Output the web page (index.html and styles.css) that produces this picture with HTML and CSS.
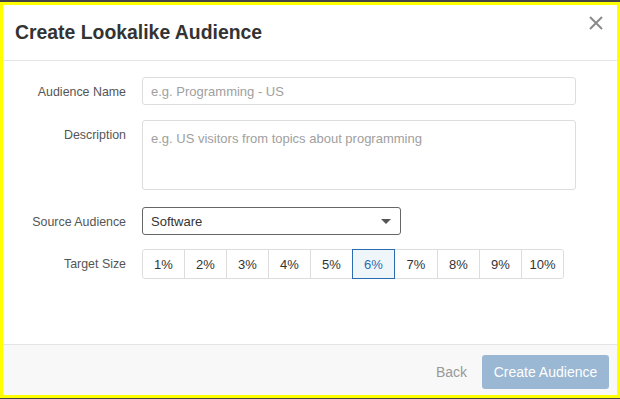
FILE: index.html
```html
<!DOCTYPE html>
<html>
<head>
    <title>Create Lookalike Audience</title>
    <link rel="stylesheet" href="styles.css">
</head>
<body>
    <div class="modal">
        <div class="modal-header">
            <h1>Create Lookalike Audience</h1>
            <button class="close-button" type="button">
                <svg width="14" height="14" viewBox="0 0 14 14">
                    <path d="M1 1 L13 13 M13 1 L1 13" stroke="#8a8a8a" stroke-width="2" fill="none"/>
                </svg>
            </button>
        </div>

        <div class="modal-body">
            <div class="form-row">
                <label for="audience-name">Audience Name</label>
                <input type="text" id="audience-name" class="text-input" placeholder="e.g. Programming - US">
            </div>
            <div class="form-row">
                <label for="description">Description</label>
                <textarea id="description" class="text-area" placeholder="e.g. US visitors from topics about programming"></textarea>
            </div>
            <div class="form-row row-select">
                <label for="source-audience">Source Audience</label>
                <div class="select-box" id="source-audience">
                    <span>Software</span>
                    <span class="caret"></span>
                </div>
            </div>
            <div class="form-row row-size">
                <label>Target Size</label>
                <div class="size-group">
                    <button class="size-button">1%</button>
                    <button class="size-button">2%</button>
                    <button class="size-button">3%</button>
                    <button class="size-button">4%</button>
                    <button class="size-button">5%</button>
                    <button class="size-button active">6%</button>
                    <button class="size-button">7%</button>
                    <button class="size-button">8%</button>
                    <button class="size-button">9%</button>
                    <button class="size-button">10%</button>
                </div>
            </div>
        </div>

        <div class="modal-footer">
            <button class="back-button">Back</button>
            <button class="create-button">Create Audience</button>
        </div>
    </div>
</body>
</html>
```

FILE: styles.css
```css
body {
    font-family: "Liberation Sans", Arial, sans-serif;
    background-color: #444444;
    margin: 0;
    padding: 2px 0 0 0;
}

.modal {
    box-sizing: border-box;
    width: 620px;
    height: 396px;
    border: 3px solid #ffff00;
    background-color: #ffffff;
    display: flex;
    flex-direction: column;
}

.modal-header {
    display: flex;
    align-items: flex-start;
    justify-content: space-between;
    height: 55px;
    border-bottom: 1px solid #e5e5e5;
    padding: 0 12px;
}

h1 {
    margin: 0;
    padding-top: 16px;
    font-size: 19.4px;
    font-weight: bold;
    color: #333333;
}

.close-button {
    background: none;
    border: none;
    padding: 0;
    margin-top: 11px;
    margin-right: 2px;
    width: 14px;
    height: 14px;
    cursor: pointer;
}

.close-button svg {
    display: block;
}

.modal-body {
    flex: 1;
    padding-top: 16px;
}

.form-row {
    display: flex;
    align-items: flex-start;
    margin-bottom: 15px;
}

.form-row label {
    width: 123px;
    margin-right: 16px;
    text-align: right;
    font-size: 12.4px;
    color: #555555;
    padding-top: 8px;
}

.text-input,
.text-area {
    box-sizing: border-box;
    width: 434px;
    border: 1px solid #dddddd;
    border-radius: 3px;
    padding: 6px 8px;
    font-family: "Liberation Sans", Arial, sans-serif;
    font-size: 13px;
    color: #333333;
    margin: 0;
}

.text-input {
    height: 28px;
}

.text-area {
    height: 70px;
    resize: none;
    padding-top: 10px;
}

.text-input::placeholder,
.text-area::placeholder {
    color: #a0a0a0;
}

.row-select {
    margin-top: 17px;
    margin-bottom: 14px;
}

.select-box {
    box-sizing: border-box;
    width: 259px;
    height: 28px;
    border: 1px solid #666666;
    border-radius: 3px;
    padding: 0 8px;
    display: flex;
    align-items: center;
    justify-content: space-between;
    font-size: 13px;
    color: #333333;
}

.caret {
    width: 0;
    height: 0;
    border-left: 5px solid transparent;
    border-right: 5px solid transparent;
    border-top: 5px solid #555555;
    margin-right: 1px;
}

.row-size label {
    padding-top: 8px;
}

.size-group {
    display: flex;
    border: 1px solid #dddddd;
    border-radius: 3px;
    height: 28px;
}

.size-button {
    width: 42px;
    height: 28px;
    margin: 0;
    padding: 0;
    background: #ffffff;
    border: none;
    border-left: 1px solid #dddddd;
    font-family: "Liberation Sans", Arial, sans-serif;
    font-size: 13px;
    color: #333333;
    cursor: pointer;
}

.size-button:first-child {
    border-left: none;
    width: 41px;
    border-radius: 3px 0 0 3px;
}

.size-button:last-child {
    border-radius: 0 3px 3px 0;
}

.size-button.active {
    box-sizing: border-box;
    height: 30px;
    margin: -1px 0;
    width: 43px;
    border: 1px solid #2b6cb0;
    background-color: #eef6fa;
    color: #2b6cb0;
}

.size-button.active + .size-button {
    border-left: none;
}

.modal-footer {
    height: 51px;
    border-top: 1px solid #e5e5e5;
    background-color: #f8f8f8;
    display: flex;
    justify-content: flex-end;
    align-items: flex-start;
    padding: 10px 8px 0 0;
    box-sizing: border-box;
}

.back-button {
    background: none;
    border: none;
    font-family: "Liberation Sans", Arial, sans-serif;
    font-size: 14px;
    color: #999999;
    height: 34px;
    padding: 0;
    margin-right: 15px;
    cursor: pointer;
}

.create-button {
    width: 127px;
    height: 34px;
    background-color: #9ab7d3;
    color: #ffffff;
    border: none;
    border-radius: 3px;
    font-family: "Liberation Sans", Arial, sans-serif;
    font-size: 14px;
    padding: 0;
    cursor: pointer;
}
```
